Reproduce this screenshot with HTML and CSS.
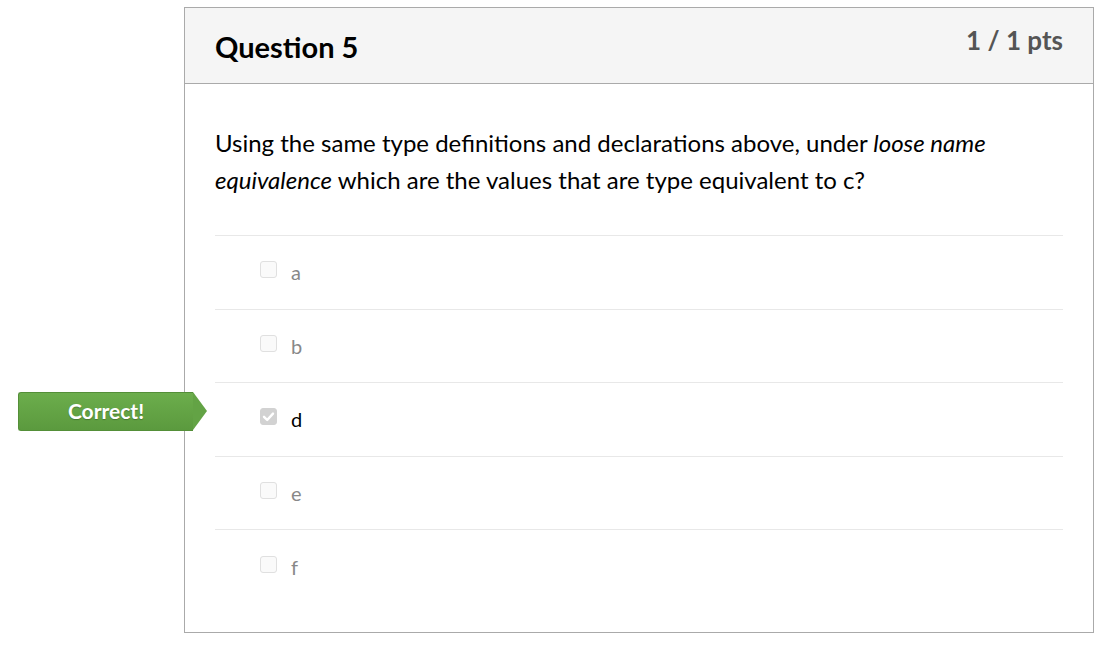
FILE: index.html
```html
<!DOCTYPE html>
<html lang="en">
<head>
<meta charset="utf-8">
<title>Question 5</title>
<link rel="stylesheet" href="styles.css">
</head>
<body>
<div class="page">
  <div class="card">
    <div class="card-header">
      <h2 class="title">Question 5</h2>
      <div class="pts">1 / 1 pts</div>
    </div>
    <div class="card-body">
      <p class="question">Using the same type definitions and declarations above, under <em>loose name equivalence</em> which are the values that are type equivalent to c?</p>
      <div class="answers">
        <div class="answer"><span class="box"></span><span class="label">a</span></div>
        <div class="answer"><span class="box"></span><span class="label">b</span></div>
        <div class="answer selected">
          <div class="badge">Correct!</div>
          <span class="box checked"><svg viewBox="0 0 17 17" width="17" height="17"><path d="M4 8.8 L7.2 12 L13 5.6" fill="none" stroke="#fff" stroke-width="2.4" stroke-linecap="round" stroke-linejoin="round"/></svg></span><span class="label">d</span>
        </div>
        <div class="answer"><span class="box"></span><span class="label">e</span></div>
        <div class="answer"><span class="box"></span><span class="label">f</span></div>
      </div>
    </div>
  </div>
</div>
</body>
</html>
```
FILE: styles.css
```css
* { box-sizing: border-box; }
html, body { margin: 0; padding: 0; background: #fff; }
body { font-family: Lato, "Open Sans", sans-serif; color: #000; }
.page { padding: 7px 0 0 184px; }
.card {
  width: 910px;
  height: 626px;
  border: 1px solid #aaaaaa;
}
.card-header {
  background: #f5f5f5;
  border-bottom: 1px solid #aaaaaa;
  height: 76px;
  display: flex;
  justify-content: space-between;
  align-items: flex-start;
  padding: 0 30px;
}
.title {
  margin: 0;
  padding-top: 21px;
  font-size: 29px;
  font-weight: 700;
  line-height: 36px;
  color: #000;
}
.pts {
  padding-top: 17px;
  font-size: 26px;
  font-weight: 700;
  line-height: 30px;
  color: #555;
}
.card-body { padding: 0 30px; }
.question {
  margin: 0;
  padding: 40px 0 37px;
  font-size: 24px;
  line-height: 37px;
}
.question em { font-style: italic; }
.answers { display: flex; flex-direction: column; }
.answer {
  position: relative;
  height: 73.6px;
  border-top: 1px solid #e8e8e8;
  display: flex;
  align-items: center;
  padding-left: 45px;
}
.box {
  width: 17px;
  height: 17px;
  border: 1px solid #e0e0e0;
  border-radius: 3px;
  background: #fafafa;
  margin-top: -5px;
  display: flex;
  flex-shrink: 0;
}
.box.checked {
  background: #d2d2d2;
  border-color: #d2d2d2;
}
.box.checked svg { margin: -1px; }
.label {
  margin-left: 14px;
  font-size: 20px;
  color: #888;
}
.selected .label { color: #000; }
.badge {
  position: absolute;
  left: -197px;
  top: 9px;
  width: 175px;
  height: 39px;
  background: linear-gradient(#6cad4c, #5b9a3e);
  border: 1px solid #548f38;
  border-right: none;
  border-radius: 3px 0 0 3px;
  color: #fff;
  font-size: 21px;
  font-weight: 700;
  line-height: 36px;
  text-align: center;
  text-shadow: 0 1px 1px rgba(0,0,0,0.25);
}
.badge::after {
  content: "";
  position: absolute;
  right: -14px;
  top: -1px;
  width: 0;
  height: 0;
  border-top: 19.5px solid transparent;
  border-bottom: 19.5px solid transparent;
  border-left: 14px solid #63a345;
}
```
